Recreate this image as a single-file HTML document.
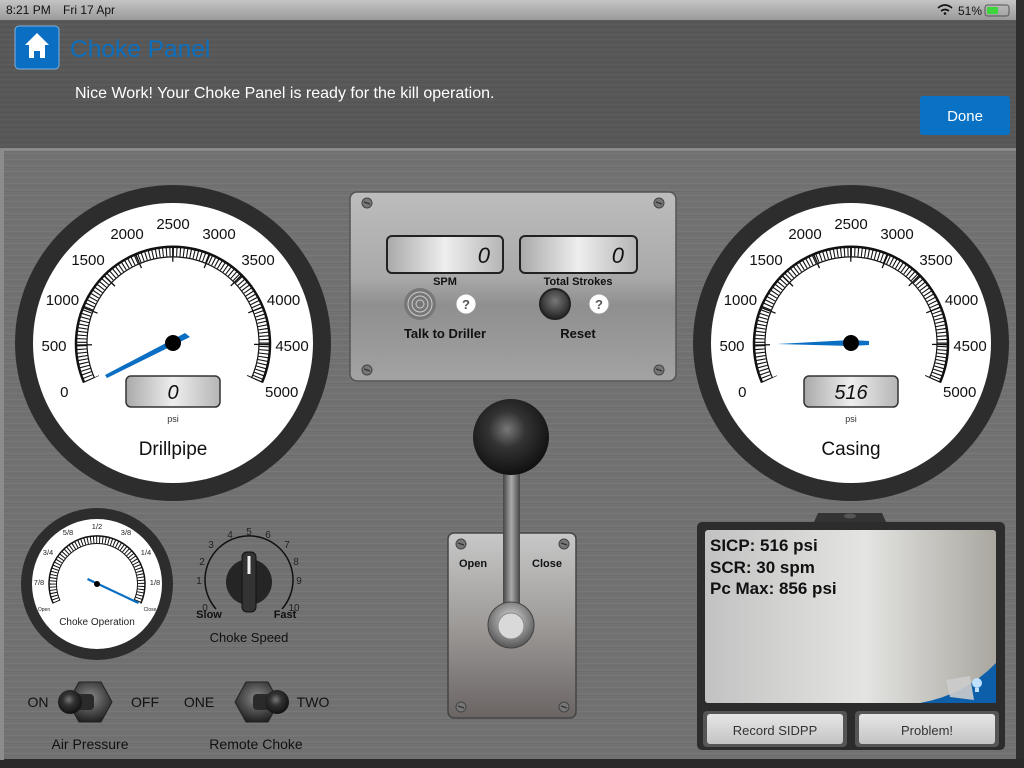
<!DOCTYPE html>
<html><head><meta charset="utf-8"><style>
html,body{margin:0;padding:0;width:1024px;height:768px;overflow:hidden;background:#6d6d6d}
svg{display:block}
text{font-family:"Liberation Sans",sans-serif}
</style></head><body>
<svg width="1024" height="768" viewBox="0 0 1024 768" xmlns="http://www.w3.org/2000/svg">
<defs>
<pattern id="brush" width="1024" height="6" patternUnits="userSpaceOnUse">
<rect width="1024" height="6" fill="#737373"/>
<rect y="1" width="1024" height="1" fill="#6f6f6f"/>
<rect y="3" width="1024" height="1" fill="#777"/>
<rect y="5" width="1024" height="1" fill="#6d6d6d"/>
</pattern>
<pattern id="brushD" width="1024" height="5" patternUnits="userSpaceOnUse">
<rect width="1024" height="5" fill="#585858"/>
<rect y="2" width="1024" height="1" fill="#545454"/>
<rect y="4" width="1024" height="1" fill="#5c5c5c"/>
</pattern>
<linearGradient id="sb" x1="0" y1="0" x2="0" y2="1"><stop offset="0" stop-color="#c4c4c4"/><stop offset="1" stop-color="#9a9a9a"/></linearGradient>
<linearGradient id="panel" x1="0" y1="0" x2="0" y2="1"><stop offset="0" stop-color="#bdbdbd"/><stop offset=".45" stop-color="#a9a9a9"/><stop offset=".6" stop-color="#8f8f8f"/><stop offset="1" stop-color="#a3a3a3"/></linearGradient>
<linearGradient id="plate" x1="0" y1="0" x2="0" y2="1"><stop offset="0" stop-color="#c8c8c8"/><stop offset=".5" stop-color="#9d9a98"/><stop offset="1" stop-color="#6a6463"/></linearGradient>
<linearGradient id="lcd" x1="0" y1="0" x2="1" y2="0"><stop offset="0" stop-color="#a9a9a9"/><stop offset=".5" stop-color="#eeeeee"/><stop offset="1" stop-color="#b5b5b5"/></linearGradient>
<linearGradient id="paper" x1="0" y1="0" x2="1" y2="0"><stop offset="0" stop-color="#c2c2c2"/><stop offset=".55" stop-color="#e4e4e2"/><stop offset="1" stop-color="#a9a79f"/></linearGradient>
<linearGradient id="shaft" x1="0" y1="0" x2="1" y2="0"><stop offset="0" stop-color="#444"/><stop offset=".5" stop-color="#aaa"/><stop offset="1" stop-color="#444"/></linearGradient>
<linearGradient id="btn" x1="0" y1="0" x2="0" y2="1"><stop offset="0" stop-color="#e6e6e6"/><stop offset="1" stop-color="#c4c4c4"/></linearGradient>
<radialGradient id="ball" cx=".45" cy=".4" r=".6"><stop offset="0" stop-color="#777"/><stop offset=".4" stop-color="#333"/><stop offset="1" stop-color="#111"/></radialGradient>
<radialGradient id="pivot" cx=".5" cy=".4" r=".6"><stop offset="0" stop-color="#ddd"/><stop offset="1" stop-color="#555"/></radialGradient>
<radialGradient id="darkbtn" cx=".5" cy=".4" r=".6"><stop offset="0" stop-color="#777"/><stop offset="1" stop-color="#222"/></radialGradient>
<radialGradient id="hex" cx=".5" cy=".4" r=".6"><stop offset="0" stop-color="#888"/><stop offset="1" stop-color="#222"/></radialGradient>
<g id="screw"><circle r="5" fill="#777" stroke="#444" stroke-width="1"/><path d="M-3,-1 L3,1" stroke="#333" stroke-width="1.3"/></g>
</defs>

<rect width="1024" height="768" fill="url(#brush)"/>
<rect y="20" width="1024" height="130" fill="url(#brushD)"/>
<rect y="148" width="1024" height="3" fill="#8a8a8a"/>
<rect width="1024" height="20" fill="url(#sb)"/>
<rect x="1016" y="0" width="8" height="768" fill="#2e2e2e"/>
<rect y="759" width="1024" height="9" fill="#2a2a2a"/>
<rect x="0" y="150" width="4" height="610" fill="#8c8c8c"/>

<text x="6" y="14" font-size="12" fill="#111">8:21 PM</text>
<text x="63" y="14" font-size="12" fill="#111">Fri 17 Apr</text>
<path d="M938,8 q7,-6 14,0 M941,11 q4,-3 8,0" stroke="#111" stroke-width="1.6" fill="none"/><circle cx="945" cy="13.5" r="1.3" fill="#111"/>
<text x="958" y="15" font-size="12" fill="#111">51%</text>
<rect x="985" y="5" width="24" height="11" rx="2.5" fill="none" stroke="#555"/>
<rect x="987" y="7" width="11" height="7" fill="#3ed43e"/>

<rect x="15" y="26" width="44" height="43" rx="4" fill="#0a6fc2" stroke="#7fb2de" stroke-width="1"/>
<path d="M37,33 L25,45 L29,45 L29,58 L34,58 L34,51 L40,51 L40,58 L45,58 L45,45 L49,45 Z" fill="#fff"/>
<text x="70" y="57" font-size="24.5" fill="#0b6fc0">Choke Panel</text>
<text x="75" y="98" font-size="16" fill="#fff">Nice Work! Your Choke Panel is ready for the kill operation.</text>
<rect x="920" y="96" width="90" height="39" rx="3" fill="#0a72c4"/>
<text x="965" y="121" font-size="15" fill="#fff" text-anchor="middle">Done</text>

<g transform="translate(173,343)">
<circle r="158" fill="#2d2d2d"/><circle r="140" fill="#fff"/>
<path d="M-88.9,39.6 A97,97 0 1 1 88.9,39.6" fill="none" stroke="#111" stroke-width="2.5"/>
<path d="M-78.5,35 A86,86 0 1 1 78.5,35" fill="none" stroke="#111" stroke-width="1.2"/>
<path d="M-83.5,37.2 A91.5,91.5 0 1 1 83.5,37.2" fill="none" stroke="#111" stroke-width="10" stroke-dasharray="1.1 2.4"/>
<path d="M-81.2,36.2 A89,89 0 1 1 81.2,36.2" fill="none" stroke="#111" stroke-width="16" stroke-dasharray="1.4 34" stroke-dashoffset="0.7"/>
<g font-size="15" fill="#111" text-anchor="middle">
<text x="-108.7" y="54">0</text><text x="-119" y="8">500</text><text x="-110.6" y="-38">1000</text><text x="-85" y="-78">1500</text><text x="-46" y="-104">2000</text><text x="0" y="-114">2500</text><text x="46" y="-104">3000</text><text x="85" y="-78">3500</text><text x="110.6" y="-38">4000</text><text x="119" y="8">4500</text><text x="108.7" y="54">5000</text>
</g>
<polygon points="-68,32 12,-10 17,-6 -66,35" fill="#0a6fc2"/>
<circle r="8" fill="#000"/>
<rect x="-47" y="33" width="94" height="31" rx="5" fill="url(#lcd)" stroke="#333" stroke-width="1.5"/>
<text x="0" y="56" font-size="20" font-style="italic" text-anchor="middle" fill="#111">0</text>
<text x="0" y="79" font-size="9" text-anchor="middle" fill="#333">psi</text>
<text x="0" y="112" font-size="19" text-anchor="middle" fill="#111">Drillpipe</text>
</g>

<g transform="translate(851,343)">
<circle r="158" fill="#2d2d2d"/><circle r="140" fill="#fff"/>
<path d="M-88.9,39.6 A97,97 0 1 1 88.9,39.6" fill="none" stroke="#111" stroke-width="2.5"/>
<path d="M-78.5,35 A86,86 0 1 1 78.5,35" fill="none" stroke="#111" stroke-width="1.2"/>
<path d="M-83.5,37.2 A91.5,91.5 0 1 1 83.5,37.2" fill="none" stroke="#111" stroke-width="10" stroke-dasharray="1.1 2.4"/>
<path d="M-81.2,36.2 A89,89 0 1 1 81.2,36.2" fill="none" stroke="#111" stroke-width="16" stroke-dasharray="1.4 34" stroke-dashoffset="0.7"/>
<g font-size="15" fill="#111" text-anchor="middle">
<text x="-108.7" y="54">0</text><text x="-119" y="8">500</text><text x="-110.6" y="-38">1000</text><text x="-85" y="-78">1500</text><text x="-46" y="-104">2000</text><text x="0" y="-114">2500</text><text x="46" y="-104">3000</text><text x="85" y="-78">3500</text><text x="110.6" y="-38">4000</text><text x="119" y="8">4500</text><text x="108.7" y="54">5000</text>
</g>
<polygon points="-74,1 0,-3 18,-2 18,2 0,3" fill="#0a6fc2"/>
<circle r="8" fill="#000"/>
<rect x="-47" y="33" width="94" height="31" rx="5" fill="url(#lcd)" stroke="#333" stroke-width="1.5"/>
<text x="0" y="56" font-size="20" font-style="italic" text-anchor="middle" fill="#111">516</text>
<text x="0" y="79" font-size="9" text-anchor="middle" fill="#333">psi</text>
<text x="0" y="112" font-size="19" text-anchor="middle" fill="#111">Casing</text>
</g>

<rect x="350" y="192" width="326" height="189" rx="7" fill="url(#panel)" stroke="#555" stroke-width="1.5"/>
<use href="#screw" x="367" y="203"/><use href="#screw" x="659" y="203"/><use href="#screw" x="367" y="370"/><use href="#screw" x="659" y="370"/>
<rect x="387" y="236" width="116" height="37" rx="5" fill="url(#lcd)" stroke="#222" stroke-width="2"/>
<rect x="520" y="236" width="117" height="37" rx="5" fill="url(#lcd)" stroke="#222" stroke-width="2"/>
<text x="490" y="263" font-size="22" font-style="italic" text-anchor="end" fill="#111">0</text>
<text x="624" y="263" font-size="22" font-style="italic" text-anchor="end" fill="#111">0</text>
<text x="445" y="285" font-size="11" font-weight="bold" text-anchor="middle" fill="#111">SPM</text>
<text x="578" y="285" font-size="11" font-weight="bold" text-anchor="middle" fill="#111">Total Strokes</text>
<circle cx="420" cy="304" r="16" fill="#777"/>
<circle cx="420" cy="304" r="12" fill="none" stroke="#ccc" stroke-width="1"/><circle cx="420" cy="304" r="8" fill="none" stroke="#ccc" stroke-width="1"/><circle cx="420" cy="304" r="4" fill="none" stroke="#ccc" stroke-width="1"/>
<circle cx="466" cy="304" r="10" fill="#fff" stroke="#999"/><text x="466" y="309" font-size="13" font-weight="bold" text-anchor="middle" fill="#555">?</text>
<circle cx="555" cy="304" r="15" fill="url(#darkbtn)" stroke="#222" stroke-width="2"/>
<circle cx="599" cy="304" r="10" fill="#fff" stroke="#999"/><text x="599" y="309" font-size="13" font-weight="bold" text-anchor="middle" fill="#555">?</text>
<text x="445" y="338" font-size="13" font-weight="bold" text-anchor="middle" fill="#111">Talk to Driller</text>
<text x="578" y="338" font-size="13" font-weight="bold" text-anchor="middle" fill="#111">Reset</text>

<rect x="448" y="533" width="128" height="185" rx="6" fill="url(#plate)" stroke="#444" stroke-width="1.5"/>
<use href="#screw" x="461" y="544"/><use href="#screw" x="564" y="544"/><use href="#screw" x="461" y="707"/><use href="#screw" x="564" y="707"/>
<text x="473" y="567" font-size="11" font-weight="bold" text-anchor="middle" fill="#111">Open</text>
<text x="547" y="567" font-size="11" font-weight="bold" text-anchor="middle" fill="#111">Close</text>
<rect x="503" y="465" width="17" height="160" fill="url(#shaft)"/>
<circle cx="511" cy="437" r="38" fill="url(#ball)"/>
<circle cx="511" cy="625" r="23" fill="url(#pivot)" stroke="#444"/>
<circle cx="511" cy="626" r="13" fill="#d9d9d9" stroke="#888"/>

<g transform="translate(97,584)">
<circle r="76" fill="#2d2d2d"/><circle r="65" fill="#fff"/>
<path d="M-40.4,18 A44.2,44.2 0 1 1 40.4,18" fill="none" stroke="#111" stroke-width="7" stroke-dasharray="1 2"/>
<path d="M-43.8,19.5 A48,48 0 1 1 43.8,19.5" fill="none" stroke="#111" stroke-width="1.5"/>
<path d="M-37,16.5 A40.5,40.5 0 1 1 37,16.5" fill="none" stroke="#111" stroke-width="1"/>
<g font-size="7.5" fill="#222" text-anchor="middle">
<text x="-58" y="1">7/8</text><text x="-49" y="-29">3/4</text><text x="-29" y="-49">5/8</text><text x="0" y="-55">1/2</text><text x="29" y="-49">3/8</text><text x="49" y="-29">1/4</text><text x="58" y="1">1/8</text>
<text x="-53" y="27" font-size="5">Open</text><text x="53" y="27" font-size="5">Close</text>
</g>
<polygon points="-9,-6 42,18 41,20 -10,-4" fill="#0a6fc2"/>
<circle r="3" fill="#000"/>
<text x="0" y="41" font-size="10" text-anchor="middle" fill="#222">Choke Operation</text>
</g>

<g transform="translate(249,582)">
<path d="M-33,27 A44,44 0 1 1 33,27" fill="none" stroke="#111" stroke-width="1.5"/>
<g font-size="10" fill="#222" text-anchor="middle">
<text x="-44" y="29">0</text><text x="-50" y="2">1</text><text x="-47" y="-17">2</text><text x="-38" y="-34">3</text><text x="-19" y="-44">4</text><text x="0" y="-47">5</text><text x="19" y="-44">6</text><text x="38" y="-34">7</text><text x="47" y="-17">8</text><text x="50" y="2">9</text><text x="45" y="29">10</text>
</g>
<text x="-40" y="36" font-size="11" font-weight="bold" text-anchor="middle" fill="#111">Slow</text>
<text x="36" y="36" font-size="11" font-weight="bold" text-anchor="middle" fill="#111">Fast</text>
<circle r="23" fill="#252525"/>
<rect x="-7" y="-30" width="14" height="60" rx="5" fill="#333" stroke="#111"/>
<rect x="-1.5" y="-26" width="3" height="18" fill="#eee"/>
<text x="0" y="60" font-size="13" text-anchor="middle" fill="#111">Choke Speed</text>
</g>

<g transform="translate(90,702)">
<polygon points="-22,0 -11,-20 11,-20 22,0 11,20 -11,20" fill="url(#hex)" stroke="#222"/>
<rect x="-22" y="-8" width="26" height="16" rx="4" fill="#2a2a2a"/>
<circle cx="-20" cy="0" r="12" fill="url(#ball)"/>
</g>
<text x="38" y="707" font-size="14" text-anchor="middle" fill="#111">ON</text>
<text x="145" y="707" font-size="14" text-anchor="middle" fill="#111">OFF</text>
<text x="90" y="749" font-size="14" text-anchor="middle" fill="#111">Air Pressure</text>
<g transform="translate(257,702)">
<polygon points="-22,0 -11,-20 11,-20 22,0 11,20 -11,20" fill="url(#hex)" stroke="#222"/>
<rect x="-4" y="-8" width="26" height="16" rx="4" fill="#2a2a2a"/>
<circle cx="20" cy="0" r="12" fill="url(#ball)"/>
</g>
<text x="199" y="707" font-size="14" text-anchor="middle" fill="#111">ONE</text>
<text x="313" y="707" font-size="14" text-anchor="middle" fill="#111">TWO</text>
<text x="256" y="749" font-size="14" text-anchor="middle" fill="#111">Remote Choke</text>

<path d="M814,522 L818,513 L882,513 L886,522 Z" fill="#333"/>
<ellipse cx="850" cy="516" rx="6" ry="2.5" fill="#555"/>
<rect x="697" y="522" width="308" height="228" rx="5" fill="#2c2c2c"/>
<rect x="705" y="530" width="291" height="173" rx="3" fill="url(#paper)"/>
<path d="M996,663 L996,703 L920,703 Q965,695 996,663 Z" fill="#0c5fa8"/>
<path d="M946,680 L970,676 L974,700 L950,697 Z" fill="#ccc" opacity=".9"/>
<circle cx="977" cy="683" r="5" fill="#bfe0ff"/><rect x="975" y="688" width="4" height="4" fill="#bfe0ff"/>
<g font-size="17" font-weight="bold" fill="#111">
<text x="710" y="551">SICP: 516 psi</text>
<text x="710" y="573">SCR: 30 spm</text>
<text x="710" y="594">Pc Max: 856 psi</text>
</g>
<rect x="703" y="711" width="144" height="36" rx="4" fill="#555"/>
<rect x="855" y="711" width="144" height="36" rx="4" fill="#555"/>
<rect x="707" y="714" width="136" height="30" rx="3" fill="url(#btn)"/>
<rect x="859" y="714" width="136" height="30" rx="3" fill="url(#btn)"/>
<text x="775" y="735" font-size="13" text-anchor="middle" fill="#333">Record SIDPP</text>
<text x="927" y="735" font-size="13" text-anchor="middle" fill="#333">Problem!</text>
</svg>
</body></html>
